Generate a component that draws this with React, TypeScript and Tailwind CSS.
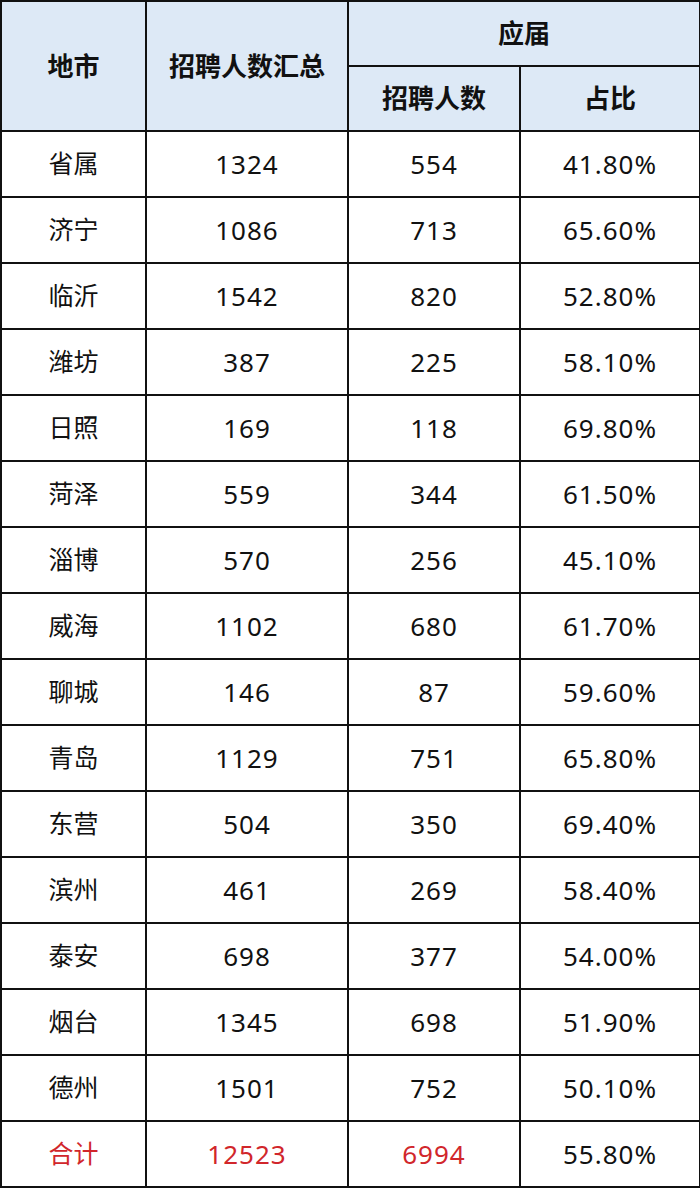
import React from 'react'

const rows: [string, string, string, string][] = [
  ['省属', '1324', '554', '41.80%'],
  ['济宁', '1086', '713', '65.60%'],
  ['临沂', '1542', '820', '52.80%'],
  ['潍坊', '387', '225', '58.10%'],
  ['日照', '169', '118', '69.80%'],
  ['菏泽', '559', '344', '61.50%'],
  ['淄博', '570', '256', '45.10%'],
  ['威海', '1102', '680', '61.70%'],
  ['聊城', '146', '87', '59.60%'],
  ['青岛', '1129', '751', '65.80%'],
  ['东营', '504', '350', '69.40%'],
  ['滨州', '461', '269', '58.40%'],
  ['泰安', '698', '377', '54.00%'],
  ['烟台', '1345', '698', '51.90%'],
  ['德州', '1501', '752', '50.10%'],
]

const cell = 'border-2 border-[#111] p-0 text-center align-middle'
const head = `${cell} h-[65px] bg-[#dde9f6] text-[26px] font-bold text-[#111]`
const body = `${cell} h-[66px] bg-white text-[25px] text-[#111]`
const num = `${body} text-[26px] tracking-[1px]`
const red = `${cell} h-[66px] bg-white text-[25px] text-[#d1262b]`
const redNum = `${red} text-[26px] tracking-[1px]`

export default function App() {
  return (
    <div className="h-[1190px] w-[700px] bg-white">
      <table
        className="w-[699px] table-fixed border-collapse"
        style={{ fontFamily: '"Noto Sans", "Noto Sans CJK SC", sans-serif' }}
      >
        <colgroup>
          <col className="w-[145px]" />
          <col className="w-[202px]" />
          <col className="w-[172px]" />
          <col className="w-[180px]" />
        </colgroup>
        <thead>
          <tr>
            <th rowSpan={2} className={head}>地市</th>
            <th rowSpan={2} className={head}>招聘人数汇总</th>
            <th colSpan={2} className={head}>应届</th>
          </tr>
          <tr>
            <th className={head}>招聘人数</th>
            <th className={head}>占比</th>
          </tr>
        </thead>
        <tbody>
          {rows.map(([city, total, fresh, pct]) => (
            <tr key={city}>
              <td className={body}>{city}</td>
              <td className={num}>{total}</td>
              <td className={num}>{fresh}</td>
              <td className={num}>{pct}</td>
            </tr>
          ))}
          <tr>
            <td className={red}>合计</td>
            <td className={redNum}>12523</td>
            <td className={redNum}>6994</td>
            <td className={num}>55.80%</td>
          </tr>
        </tbody>
      </table>
    </div>
  )
}
